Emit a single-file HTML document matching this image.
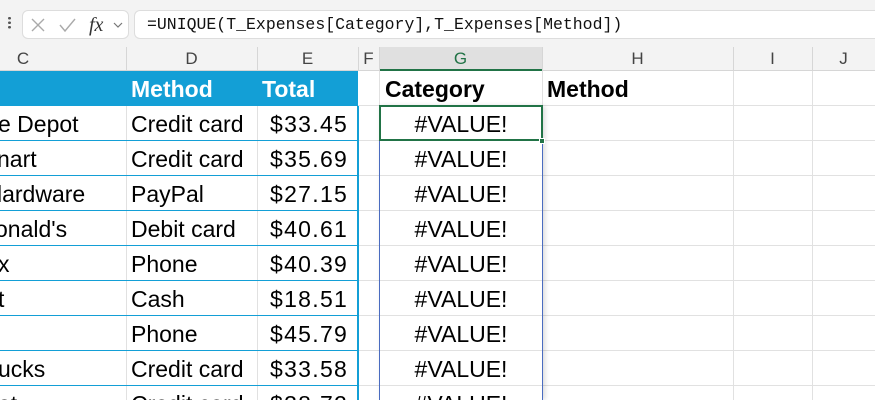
<!DOCTYPE html>
<html style="width:875px;height:400px;overflow:hidden"><head><style>
*{margin:0;padding:0;box-sizing:border-box}
body{width:875px;height:400px;overflow:hidden;background:#fff;font-family:"Liberation Sans",sans-serif}
#w{position:relative;width:875px;height:400px;overflow:hidden}
.a{position:absolute}
.hl{position:absolute;height:1px;background:#e1e1e1}
.vl{position:absolute;width:1px;background:#e1e1e1}
.t{position:absolute;font-size:23px;color:#000;line-height:36px;white-space:nowrap}
.n{letter-spacing:1.3px}
.l{height:14px;overflow:hidden}
.ch{position:absolute;top:47px;height:23px;font-size:17px;color:#444;text-align:center;line-height:24px}
</style></head><body><div id="w">
<div class="a" style="left:0;top:0;width:875px;height:47px;background:#f3f3f3"></div>
<div class="a" style="left:8px;top:16px;width:3px;height:13px;background:radial-gradient(circle,#555 1.3px,transparent 1.5px) 0 0/3px 4.5px"></div>
<div class="a" style="left:22px;top:10px;width:107px;height:29px;background:#fff;border:1px solid #ddd;border-radius:6px"></div>
<svg class="a" style="left:28px;top:14px" width="100" height="22"><path d="M4 5l12 12M16 5L4 17" stroke="#aaa" stroke-width="1.4" fill="none"/><path d="M32 11l5 6 10-12" stroke="#aaa" stroke-width="1.4" fill="none"/><text x="61" y="17" font-family="Liberation Serif" font-style="italic" font-size="20" fill="#333">fx</text><path d="M86 9l4 4 4-4" stroke="#777" stroke-width="1.2" fill="none"/></svg>
<div class="a" style="left:134px;top:10px;width:741px;height:29px;background:#fff;border:1px solid #ddd;border-radius:6px 0 0 6px;border-right:none"></div>
<div class="a" style="left:147px;top:10px;line-height:29px;font-family:'Liberation Mono',monospace;font-size:16.5px;color:#111">=UNIQUE(T_Expenses[Category],T_Expenses[Method])</div>
<div class="a" style="left:0;top:47px;width:875px;height:24px;background:#f3f3f3;border-bottom:1px solid #d6d6d6"></div>
<div class="a" style="left:379px;top:47px;width:163px;height:24px;background:#e0e0e0;border-bottom:2px solid #217346"></div>
<div class="ch" style="width:126px;left:-40px">C</div>
<div class="ch" style="left:126px;width:131px">D</div>
<div class="ch" style="left:257px;width:101px">E</div>
<div class="ch" style="left:358px;width:21px">F</div>
<div class="ch" style="left:379px;width:163px;color:#217346">G</div>
<div class="ch" style="left:542px;width:191px">H</div>
<div class="ch" style="left:733px;width:79px">I</div>
<div class="ch" style="left:812px;width:63px">J</div>
<div class="vl" style="left:126px;top:47px;height:24px;background:#d6d6d6"></div>
<div class="vl" style="left:257px;top:47px;height:24px;background:#d6d6d6"></div>
<div class="vl" style="left:358px;top:47px;height:24px;background:#d6d6d6"></div>
<div class="vl" style="left:379px;top:47px;height:24px;background:#d6d6d6"></div>
<div class="vl" style="left:542px;top:47px;height:24px;background:#d6d6d6"></div>
<div class="vl" style="left:733px;top:47px;height:24px;background:#d6d6d6"></div>
<div class="vl" style="left:812px;top:47px;height:24px;background:#d6d6d6"></div>
<div class="hl" style="left:358px;top:105px;width:517px"></div>
<div class="hl" style="left:358px;top:140px;width:517px"></div>
<div class="hl" style="left:358px;top:175px;width:517px"></div>
<div class="hl" style="left:358px;top:210px;width:517px"></div>
<div class="hl" style="left:358px;top:245px;width:517px"></div>
<div class="hl" style="left:358px;top:280px;width:517px"></div>
<div class="hl" style="left:358px;top:315px;width:517px"></div>
<div class="hl" style="left:358px;top:350px;width:517px"></div>
<div class="hl" style="left:358px;top:385px;width:517px"></div>
<div class="vl" style="left:379px;top:71px;height:329px"></div>
<div class="vl" style="left:542px;top:71px;height:329px"></div>
<div class="vl" style="left:733px;top:71px;height:329px"></div>
<div class="vl" style="left:812px;top:71px;height:329px"></div>
<div class="a" style="left:0;top:71px;width:358px;height:35px;background:#139fd6"></div>
<div class="t" style="left:131px;top:71px;color:#fff;font-weight:bold">Method</div>
<div class="t" style="left:262px;top:71px;color:#fff;font-weight:bold">Total</div>
<div class="a" style="left:357px;top:106px;width:2px;height:294px;background:#139fd6"></div>
<div class="vl" style="left:126px;top:106px;height:294px"></div>
<div class="vl" style="left:257px;top:106px;height:294px"></div>
<div class="hl" style="left:0;top:140px;width:358px;background:#139fd6"></div>
<div class="hl" style="left:0;top:175px;width:358px;background:#139fd6"></div>
<div class="hl" style="left:0;top:210px;width:358px;background:#139fd6"></div>
<div class="hl" style="left:0;top:245px;width:358px;background:#139fd6"></div>
<div class="hl" style="left:0;top:280px;width:358px;background:#139fd6"></div>
<div class="hl" style="left:0;top:315px;width:358px;background:#139fd6"></div>
<div class="hl" style="left:0;top:350px;width:358px;background:#139fd6"></div>
<div class="hl" style="left:0;top:385px;width:358px;background:#139fd6"></div>
<div class="t" style="left:-2px;top:106px">e Depot</div>
<div class="t" style="left:-3px;top:141px">nart</div>
<div class="t" style="left:-3px;top:176px">lardware</div>
<div class="t" style="left:-5px;top:211px">onald's</div>
<div class="t" style="left:-2px;top:246px">x</div>
<div class="t" style="left:-2px;top:281px">t</div>
<div class="t" style="left:-2px;top:351px">ucks</div>
<div class="t l" style="left:-2px;top:386px">ot</div>
<div class="t" style="left:131px;top:106px">Credit card</div>
<div class="t" style="left:131px;top:141px">Credit card</div>
<div class="t" style="left:131px;top:176px">PayPal</div>
<div class="t" style="left:131px;top:211px">Debit card</div>
<div class="t" style="left:131px;top:246px">Phone</div>
<div class="t" style="left:131px;top:281px">Cash</div>
<div class="t" style="left:131px;top:316px">Phone</div>
<div class="t" style="left:131px;top:351px">Credit card</div>
<div class="t l" style="left:131px;top:386px">Credit card</div>
<div class="t n" style="left:270px;top:106px">$33.45</div>
<div class="t n" style="left:270px;top:141px">$35.69</div>
<div class="t n" style="left:270px;top:176px">$27.15</div>
<div class="t n" style="left:270px;top:211px">$40.61</div>
<div class="t n" style="left:270px;top:246px">$40.39</div>
<div class="t n" style="left:270px;top:281px">$18.51</div>
<div class="t n" style="left:270px;top:316px">$45.79</div>
<div class="t n" style="left:270px;top:351px">$33.58</div>
<div class="t n l" style="left:270px;top:386px">$38.72</div>
<div class="t" style="left:385px;top:71px;font-weight:bold">Category</div>
<div class="t" style="left:547px;top:71px;font-weight:bold">Method</div>
<div class="a" style="left:379px;top:106px;width:164px;height:294px;border:1px solid #4a6cc0;border-bottom:none;box-shadow:2px 0 5px rgba(0,0,0,.15)"></div>
<div class="a" style="left:379px;top:105px;width:164px;height:36px;border:2px solid #217346"></div>
<div class="a" style="left:539px;top:138px;width:6px;height:6px;background:#217346;border:1px solid #fff"></div>
<div class="t" style="left:379px;width:164px;text-align:center;top:106px">#VALUE!</div>
<div class="t" style="left:379px;width:164px;text-align:center;top:141px">#VALUE!</div>
<div class="t" style="left:379px;width:164px;text-align:center;top:176px">#VALUE!</div>
<div class="t" style="left:379px;width:164px;text-align:center;top:211px">#VALUE!</div>
<div class="t" style="left:379px;width:164px;text-align:center;top:246px">#VALUE!</div>
<div class="t" style="left:379px;width:164px;text-align:center;top:281px">#VALUE!</div>
<div class="t" style="left:379px;width:164px;text-align:center;top:316px">#VALUE!</div>
<div class="t" style="left:379px;width:164px;text-align:center;top:351px">#VALUE!</div>
<div class="t l" style="left:379px;width:164px;text-align:center;top:386px">#VALUE!</div>
</div></body></html>
